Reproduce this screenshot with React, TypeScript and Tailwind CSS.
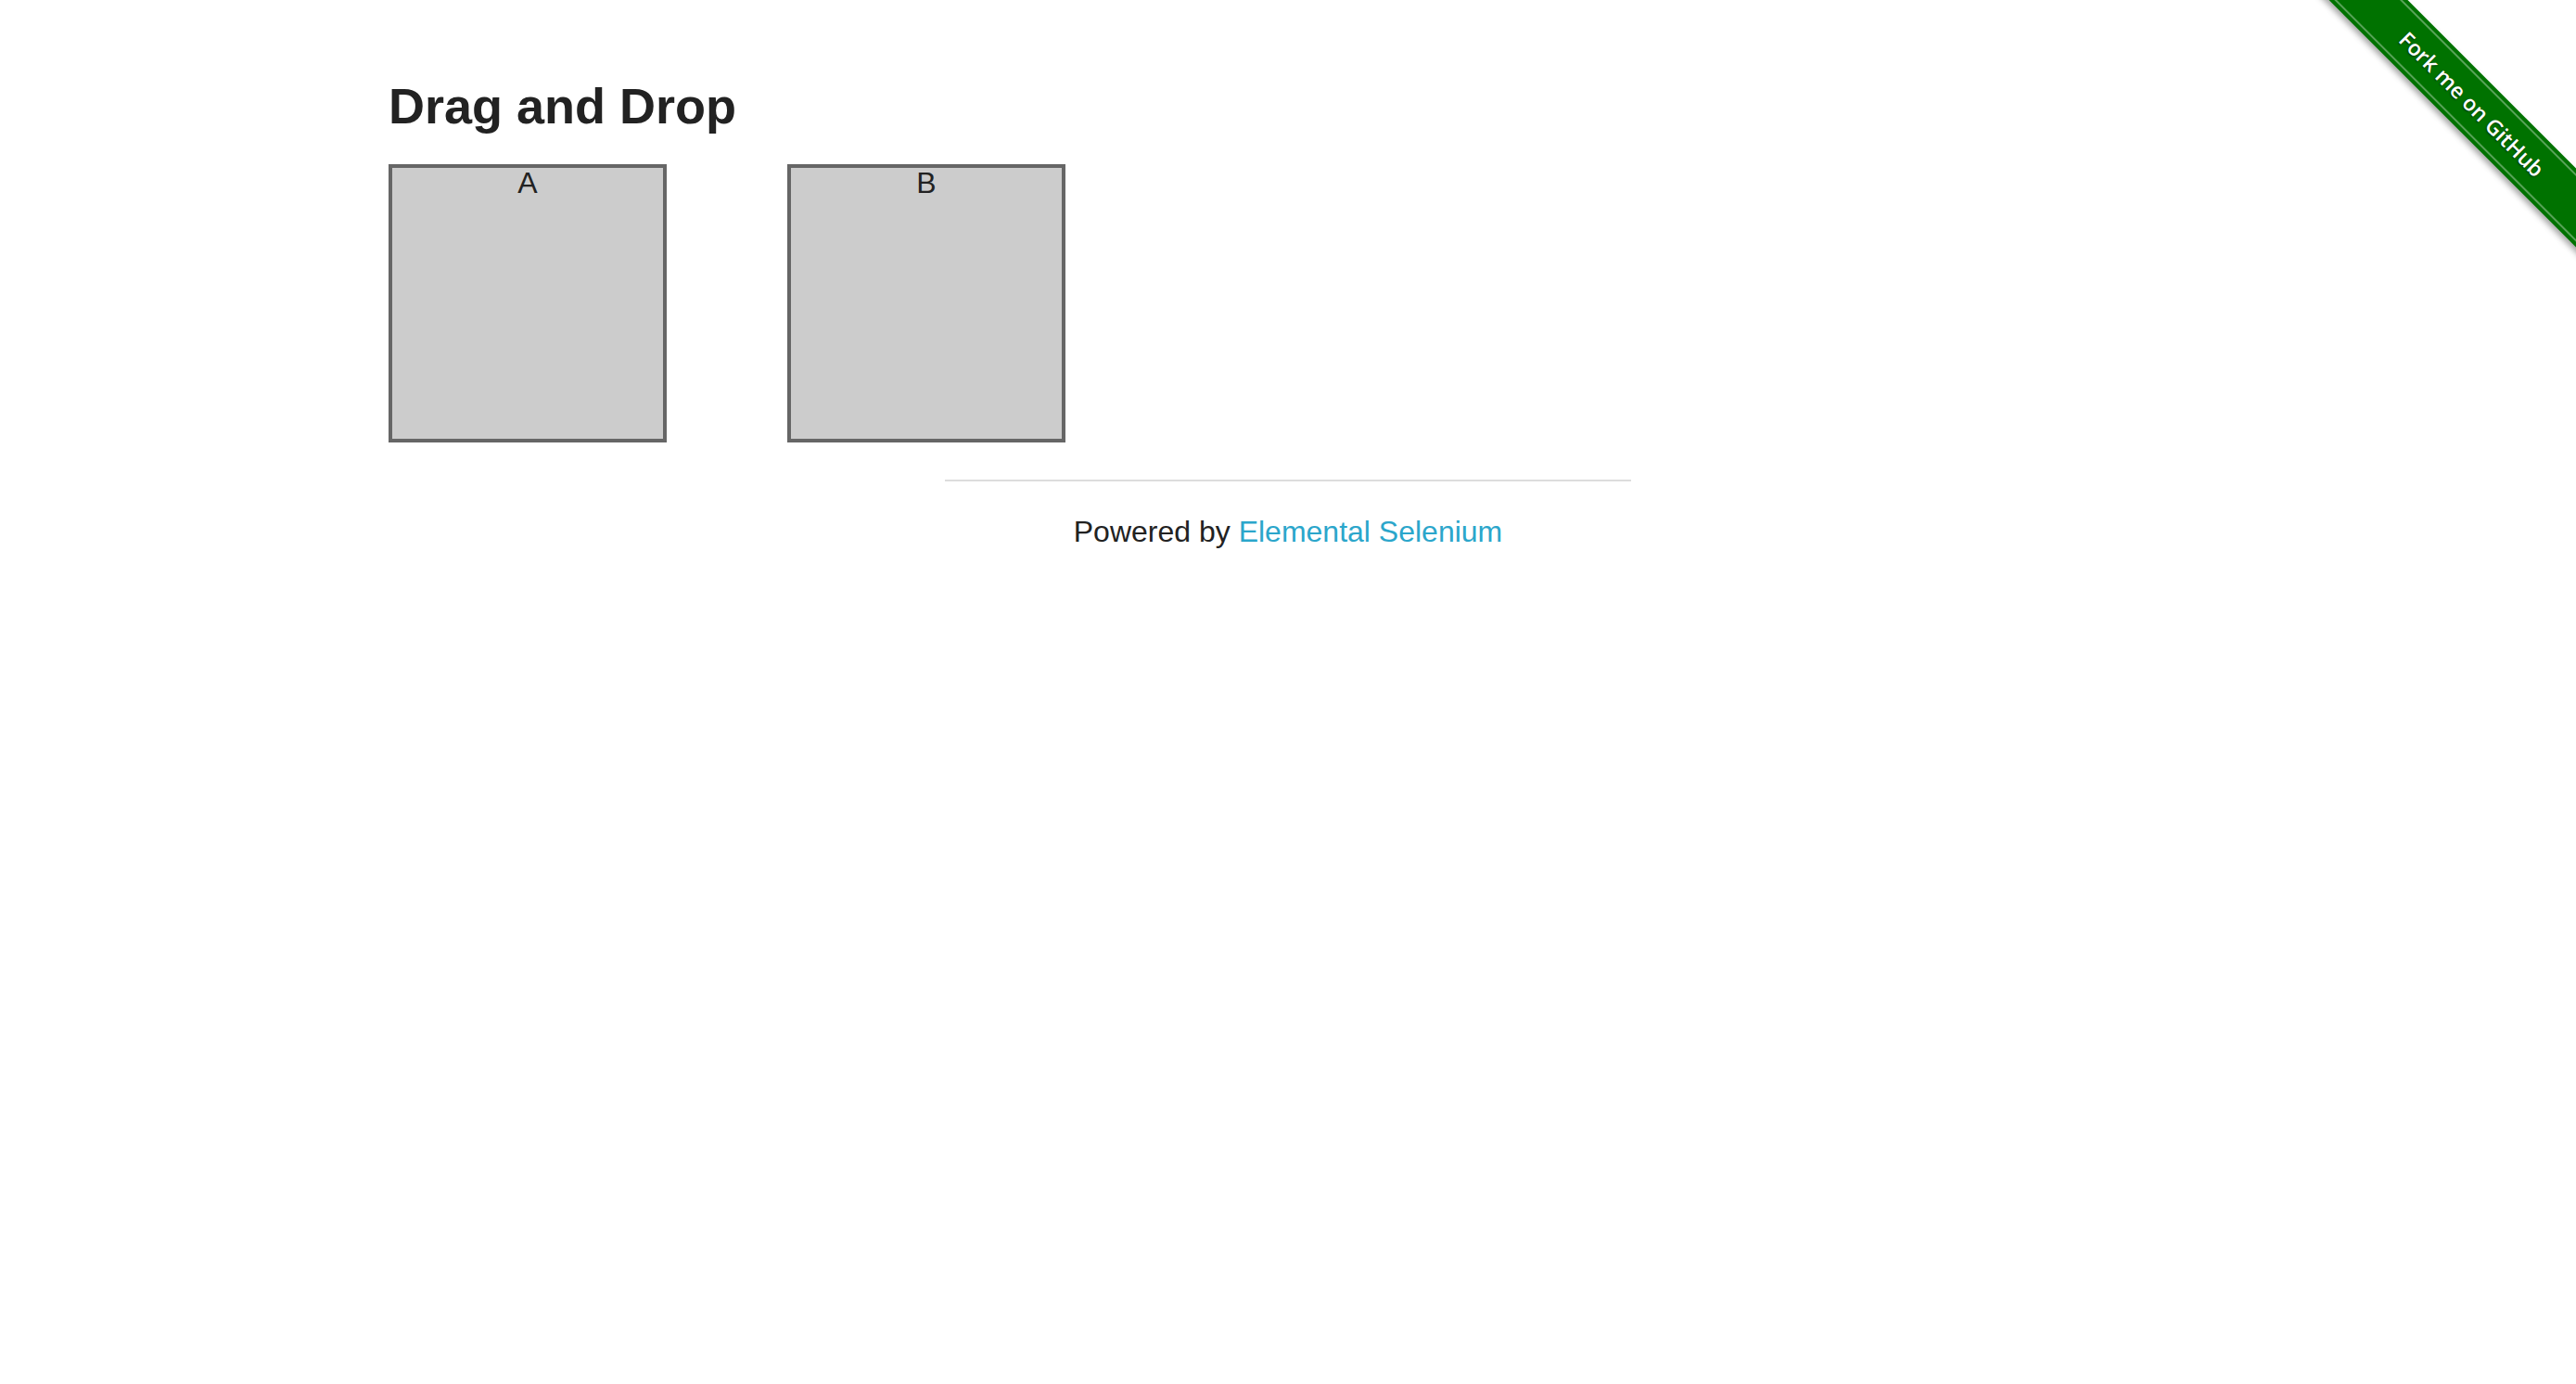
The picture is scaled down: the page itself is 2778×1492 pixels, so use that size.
import React from "react";

export default function App() {
  return (
    <div
      className="relative min-h-screen w-full overflow-hidden bg-white text-[#222222]"
      style={{ fontFamily: '"Liberation Sans", Arial, Helvetica, sans-serif' }}
    >
      <div className="mx-auto max-w-[2000px] px-[30px] pt-[87px]">
        <h3 className="m-0 text-[54px] font-bold leading-none">Drag and Drop</h3>
        <div className="mt-[36px] flex gap-[130px]">
          <div className="h-[300px] w-[300px] border-[4px] border-[#666666] bg-[#cccccc] text-center text-[32px] leading-none">
            <header>A</header>
          </div>
          <div className="h-[300px] w-[300px] border-[4px] border-[#666666] bg-[#cccccc] text-center text-[32px] leading-none">
            <header>B</header>
          </div>
        </div>
      </div>

      <div className="mt-[40px] flex flex-col items-center">
        <div className="h-[2px] w-[740px] bg-[#dddddd]" />
        <div className="mt-[38px] text-[32px] leading-none">
          Powered by <a className="text-[#2ba6cb]" href="#">Elemental Selenium</a>
        </div>
      </div>

      <div className="absolute right-0 top-0 h-[298px] w-[298px] overflow-hidden">
        <div
          className="absolute left-[-64px] top-[82px] flex h-[60px] w-[500px] rotate-45 items-center justify-center bg-[#007200] shadow-[0_4px_6px_rgba(0,0,0,0.35)]"
        >
          <div className="absolute inset-x-0 top-[4px] h-[2px] bg-[rgba(255,255,255,0.35)]" />
          <div className="absolute inset-x-0 bottom-[4px] h-[2px] bg-[rgba(255,255,255,0.35)]" />
          <span
            className="text-[23px] font-semibold text-white [text-shadow:0_1px_2px_rgba(0,0,0,0.6)]"
            style={{ fontFamily: '"Open Sans", "Noto Sans", sans-serif' }}
          >
            Fork me on GitHub
          </span>
        </div>
      </div>
    </div>
  );
}
